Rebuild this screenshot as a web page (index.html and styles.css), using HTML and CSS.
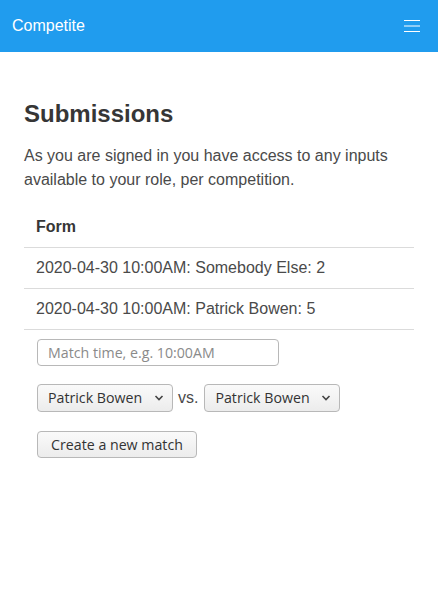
FILE: index.html
```html
<!DOCTYPE html>
<html>
<head>
<meta charset="utf-8">
<link rel="stylesheet" href="styles.css">
</head>
<body>
<header class="navbar">
  <span class="brand">Competite</span>
  <button class="burger" aria-label="menu">
    <svg width="16" height="12" viewBox="0 0 16 12"><path d="M0 0.5H16M0 6H16M0 11.5H16" stroke="#fff" stroke-width="1"/></svg>
  </button>
</header>
<main class="content">
  <h1 class="title">Submissions</h1>
  <p class="lead">As you are signed in you have access to any inputs available to your role, per competition.</p>
  <table class="table">
    <thead><tr><th>Form</th></tr></thead>
    <tbody>
      <tr><td>2020-04-30 10:00AM: Somebody Else: 2</td></tr>
      <tr><td>2020-04-30 10:00AM: Patrick Bowen: 5</td></tr>
      <tr><td class="form-cell">
        <form class="match-form">
          <input class="time-input" type="text" placeholder="Match time, e.g. 10:00AM">
          <div class="versus">
            <div class="sel-wrap">
              <select class="sel"><option>Patrick Bowen</option></select>
              <svg class="chev" width="10" height="6" viewBox="0 0 10 6"><path d="M1.5 1L5 4.5L8.5 1" fill="none" stroke="#444" stroke-width="1.6"/></svg>
            </div>
            <span class="vs">vs.</span>
            <div class="sel-wrap">
              <select class="sel"><option>Patrick Bowen</option></select>
              <svg class="chev" width="10" height="6" viewBox="0 0 10 6"><path d="M1.5 1L5 4.5L8.5 1" fill="none" stroke="#444" stroke-width="1.6"/></svg>
            </div>
          </div>
          <button class="btn" type="button">Create a new match</button>
        </form>
      </td></tr>
    </tbody>
  </table>
</main>
</body>
</html>
```
FILE: styles.css
```css
* { box-sizing: border-box; }
html, body { margin: 0; padding: 0; background: #fff; }
body { font-family: "Liberation Sans", Arial, sans-serif; color: #363636; }
.navbar {
  height: 52px;
  background: #209cee;
  display: flex;
  align-items: center;
  justify-content: space-between;
  padding: 0 12px;
}
.brand { color: #fff; font-size: 16px; }
.burger {
  background: none; border: 0; padding: 0; width: 16px; height: 12px;
  display: flex; margin-right: 6px;
}
.burger svg { display: block; }
.content { padding: 47px 24px 24px; }
.title { font-size: 24px; font-weight: 700; margin: 0 0 15px; line-height: 30px; color: #363636; }
.lead { font-size: 16px; line-height: 24px; margin: 0 0 16px; color: #4a4a4a; }
.table { width: 100%; border-collapse: collapse; font-size: 16px; }
.table th { text-align: left; font-weight: 700; padding: 8px 12px; height: 39px; border-bottom: 1px solid #dbdbdb; color: #363636; }
.table td { padding: 8px 12px; height: 41px; border-bottom: 1px solid #dbdbdb; color: #4a4a4a; }
.table td.form-cell { border-bottom: 0; padding: 9px 12px; }
.match-form { display: flex; flex-direction: column; align-items: flex-start; }
.time-input {
  font-family: "Open Sans", "DejaVu Sans", sans-serif;
  font-size: 14.2px;
  width: 242px; height: 27px;
  border: 1px solid #b8b8b8; border-radius: 4px;
  padding: 0 8px 0 10px; color: #444;
  margin: 0 0 0 1px;
}
.time-input::placeholder { color: #8a8a8a; }
.versus { display: flex; align-items: center; margin-top: 18px; margin-left: 1px; }
.sel-wrap { position: relative; }
.sel {
  -webkit-appearance: none; appearance: none;
  font-family: "Open Sans", "DejaVu Sans", sans-serif;
  font-size: 14.2px; color: #333;
  height: 28px; width: 136px;
  border: 1px solid #b8b8b8; border-radius: 4px;
  background: linear-gradient(#fafafa, #ececec);
  padding: 0 6px 0 10px;
  display: block;
}
.chev { position: absolute; right: 9px; top: 11px; }
.vs { font-size: 16px; color: #4a4a4a; margin: 0 6px 0 5px; }
.btn {
  font-family: "Open Sans", "DejaVu Sans", sans-serif;
  font-size: 14.2px; color: #333;
  height: 27px; width: 160px;
  border: 1px solid #b8b8b8; border-radius: 4px;
  background: linear-gradient(#fafafa, #ececec);
  margin-top: 19px; margin-left: 1px;
  padding: 0;
}
```
